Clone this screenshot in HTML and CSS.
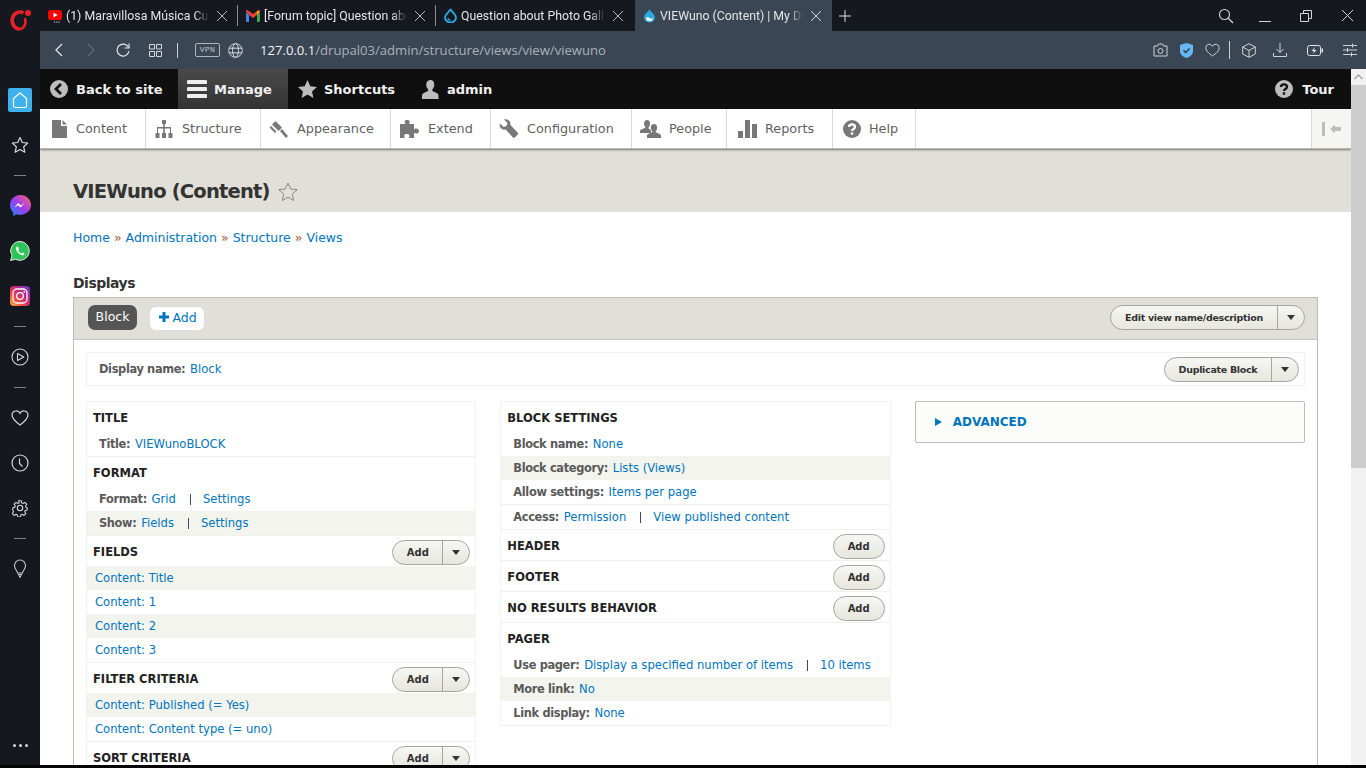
FILE: index.html
```html
<!DOCTYPE html>
<html lang="en">
<head>
<meta charset="utf-8">
<title>VIEWuno (Content) | My Drupal</title>
<link rel="stylesheet" href="styles.css">
</head>
<body>
<div class="app">
  <aside class="sidebar">
    <div class="logo">
      <svg width="24" height="24" viewBox="0 0 24 24"><path d="M15.500 4.800A8 8.500 0 1 0 12.500 21" fill="none" stroke="#e8202a" stroke-width="3.600"/><path d="M17 10c1.500 5-.5 10-4.500 11" fill="none" stroke="#e8202a" stroke-width="2.600"/><circle cx="20" cy="5" r="3" fill="#e8202a"/></svg>
    </div>
    <div class="side-item"><span class="home-tile"><svg width="18" height="18" viewBox="0 0 18 18"><path d="M2.500 7.500 9 2l6.500 5.500V15a1.500 1.500 0 0 1-1.500 1.500H4A1.500 1.500 0 0 1 2.500 15z" fill="none" stroke="#fff" stroke-width="1.200"/></svg></span></div>
    <div class="side-item"><svg width="18" height="18" viewBox="0 0 18 18"><path d="M9 1.500l2.300 5 5.400.6-4 3.700 1.100 5.400L9 13.500l-4.800 2.700 1.100-5.400-4-3.700 5.400-.6z" fill="none" stroke="#d5d7da" stroke-width="1.200" stroke-linejoin="round"/></svg></div>
    <div class="side-dash"></div>
    <div class="side-item"><svg width="21" height="21" viewBox="0 0 20 20"><defs><linearGradient id="msg" x1="0" y1="1" x2="1" y2="0"><stop offset="0" stop-color="#1a8cff"/><stop offset=".5" stop-color="#a33bf0"/><stop offset="1" stop-color="#ff6a68"/></linearGradient></defs><path d="M10 0C4.400 0 0 4.100 0 9.600c0 2.900 1.200 5.400 3.100 7.100V20l3-1.700c1.200.4 2.500.6 3.900.6 5.600 0 10-4.100 10-9.300S15.600 0 10 0z" fill="url(#msg)"/><path d="M4 12l3.800-4.300 2.500 2.300 3.600-2.300-3.800 4.300-2.500-2.300z" fill="#fff"/></svg></div>
    <div class="side-item"><svg width="20" height="20" viewBox="0 0 20 20"><path d="M10 .5a9.400 9.400 0 0 0-8 14.300L.6 19.500l4.800-1.300A9.400 9.400 0 1 0 10 .5z" fill="#2fc45a" stroke="#e6e6e6" stroke-width="1"/><path d="M7.200 5.600c-.4 0-1.200.7-1.200 2 0 2.600 3.300 6.300 6.300 6.700 1.300.1 2.200-.8 2.200-1.500 0-.5-1.800-1.400-2.200-1.300-.4.100-.6.900-1 .9-.9 0-2.900-1.800-3-2.800 0-.4.700-.7.700-1.100 0-.4-.8-2.900-1.800-2.900z" fill="#fff"/></svg></div>
    <div class="side-item"><svg width="20" height="20" viewBox="0 0 20 20"><defs><linearGradient id="ig" x1="0" y1="1" x2="1" y2="0"><stop offset="0" stop-color="#fdc04d"/><stop offset=".3" stop-color="#f2503c"/><stop offset=".6" stop-color="#c9237f"/><stop offset="1" stop-color="#6a3fd0"/></linearGradient></defs><rect width="20" height="20" rx="4" fill="url(#ig)"/><rect x="3" y="3" width="14" height="14" rx="4" fill="none" stroke="#fff" stroke-width="1.300"/><circle cx="10" cy="10" r="3.300" fill="none" stroke="#fff" stroke-width="1.300"/><circle cx="14.200" cy="5.800" r=".9" fill="#fff"/></svg></div>
    <div class="side-dash"></div>
    <div class="side-item"><svg width="18" height="18" viewBox="0 0 18 18"><circle cx="9" cy="9" r="8" fill="none" stroke="#d5d7da" stroke-width="1.100"/><path d="M6.500 5.500 12.800 9l-6.300 3.500z" fill="none" stroke="#d5d7da" stroke-width="1.100" stroke-linejoin="round"/></svg></div>
    <div class="side-dash"></div>
    <div class="side-item"><svg width="18" height="18" viewBox="0 0 18 18"><path d="M9 16C5 13 1 10 1 6a4.200 4.200 0 0 1 8-1.700A4.200 4.200 0 0 1 17 6c0 4-4 7-8 10z" fill="none" stroke="#d5d7da" stroke-width="1.200"/></svg></div>
    <div class="side-item"><svg width="18" height="18" viewBox="0 0 18 18"><circle cx="9" cy="9" r="8" fill="none" stroke="#d5d7da" stroke-width="1.200"/><path d="M8.500 4.500V9.500l3 3" fill="none" stroke="#d5d7da" stroke-width="1.200"/></svg></div>
    <div class="side-item"><svg width="18" height="18" viewBox="0 0 18 18"><circle cx="9" cy="9" r="2.700" fill="none" stroke="#d5d7da" stroke-width="1.100"/><path d="M7.500 1h3l.4 2.300 1.500.7 2-1.300 2.100 2.100-1.300 2 .7 1.500L17 8.700v2.600l-2.100.4-.7 1.500 1.300 2-2.100 2.100-2-1.300-1.500.7-.4 2.300h-3l-.4-2.300-1.500-.7-2 1.300-2.100-2.100 1.300-2-.7-1.500L1 11.300V8.700l2.100-.4.700-1.500-1.300-2 2.100-2.100 2 1.300 1.500-.7z" transform="translate(.9 .9) scale(.9)" fill="none" stroke="#d5d7da" stroke-width="1.200" stroke-linejoin="round"/></svg></div>
    <div class="side-dash"></div>
    <div class="side-item"><svg width="18" height="20" viewBox="0 0 18 20"><path d="M6.500 14c0-2-3-3.500-3-7.500a5.500 5.500 0 0 1 11 0c0 4-3 5.500-3 7.500z" fill="none" stroke="#c8cacd" stroke-width="1.100"/><path d="M7 15h4v1.500H7zM8 17h2v1.500H8z" fill="#c8cacd"/></svg></div>
    <div class="side-more"><i></i><i></i><i></i></div>
  </aside>

  <div class="browser">
    <div class="tabstrip">
      <div class="tab">
        <svg class="fav" width="14" height="14" viewBox="0 0 14 14"><rect y="1" width="14" height="10" rx="2.500" fill="#f00"/><path d="M5.500 3.500 9.500 6l-4 2.500z" fill="#fff"/><path d="M6 12.500h1.200v1H6zM8.200 12.500h1.200v1H8.200zM10.400 12.500h1.200v1h-1.200z" fill="#ddd"/></svg>
        <span class="tab-title">(1) Maravillosa Música Curativa</span>
        <svg class="tab-x" width="12" height="12" viewBox="0 0 12 12"><path d="M1 1l10 10M11 1 1 11" stroke="#b9bcc0" stroke-width="1"/></svg>
      </div>
      <div class="tab-sep"></div>
      <div class="tab">
        <svg class="fav" width="14" height="12" viewBox="0 0 14 12"><path d="M0 2v9a1 1 0 0 0 1 1h2V5z" fill="#4285f4"/><path d="M14 2v9a1 1 0 0 1-1 1h-2V5z" fill="#34a853"/><path d="M0 1.500C0 .3 1.300-.3 2.200.4L7 4l4.800-3.600c.9-.7 2.200-.1 2.200 1.100L11 5 7 8 3 5z" fill="#ea4335"/><path d="M11 .9l3 .6L11 5z" fill="#fbbc04"/></svg>
        <span class="tab-title">[Forum topic] Question about Photo</span>
        <svg class="tab-x" width="12" height="12" viewBox="0 0 12 12"><path d="M1 1l10 10M11 1 1 11" stroke="#b9bcc0" stroke-width="1"/></svg>
      </div>
      <div class="tab-sep"></div>
      <div class="tab">
        <svg class="fav" width="13" height="15" viewBox="0 0 13 15"><path d="M6.500 1C6 3.500 1 6 1 9.500a5.500 5 0 0 0 11 0C12 6 7 3.500 6.500 1z" fill="none" stroke="#2ba9e0" stroke-width="1.800"/><path d="M4 10c0 1.500 1.200 2.400 2.500 2.400" fill="none" stroke="#2ba9e0" stroke-width="1.200"/></svg>
        <span class="tab-title">Question about Photo Gallery</span>
        <svg class="tab-x" width="12" height="12" viewBox="0 0 12 12"><path d="M1 1l10 10M11 1 1 11" stroke="#b9bcc0" stroke-width="1"/></svg>
      </div>
      <div class="tab-gap"></div>
      <div class="tab tab-active">
        <svg class="fav" width="13" height="15" viewBox="0 0 13 15"><path d="M6.500 1C6 3.500 1 6 1 9.500a5.500 5 0 0 0 11 0C12 6 7 3.500 6.500 1z" fill="#2ba9e0"/><path d="M3 10c1-1.500 2.500-1 3.500 0s2.500 1 3.500 0c0 2-1.500 3.300-3.500 3.300S3 12 3 10z" fill="#fff"/></svg>
        <span class="tab-title">VIEWuno (Content) | My Drupal</span>
        <svg class="tab-x" width="12" height="12" viewBox="0 0 12 12"><path d="M1 1l10 10M11 1 1 11" stroke="#d5d8db" stroke-width="1"/></svg>
      </div>
      <svg class="tab-plus" width="12" height="12" viewBox="0 0 12 12"><path d="M6 0v12M0 6h12" stroke="#dfe1e3" stroke-width="1"/></svg>
      <div class="win-controls">
        <svg width="16" height="16" viewBox="0 0 16 16"><circle cx="6.500" cy="6.500" r="5" fill="none" stroke="#d5d7da" stroke-width="1.100"/><path d="M10 10l5 5" stroke="#d5d7da" stroke-width="1.200"/></svg>
        <svg width="12" height="12" viewBox="0 0 12 12"><path d="M0 11.500h12" stroke="#d5d7da" stroke-width="1"/></svg>
        <svg width="12" height="12" viewBox="0 0 12 12"><path d="M.5 3.500h8v8h-8zM3.500 3.500v-3h8v8h-3" fill="none" stroke="#d5d7da" stroke-width="1"/></svg>
        <svg width="13" height="13" viewBox="0 0 13 13"><path d="M1 1l11 11M12 1 1 12" stroke="#d5d7da" stroke-width="1"/></svg>
      </div>
    </div>

    <div class="addressbar">
      <div class="nav-left">
        <svg class="nav-back" width="10" height="14" viewBox="0 0 10 14"><path d="M8 1 2 7l6 6" fill="none" stroke="#e3e5e7" stroke-width="1.300"/></svg>
        <svg class="nav-fwd" width="10" height="14" viewBox="0 0 10 14"><path d="M2 1l6 6-6 6" fill="none" stroke="#5f6b79" stroke-width="1.300"/></svg>
        <svg class="nav-reload" width="14" height="14" viewBox="0 0 14 14"><path d="M12.500 4.500A6 6 0 1 0 13 8" fill="none" stroke="#e3e5e7" stroke-width="1.200"/><path d="M13 .5v4.500H8.500" fill="none" stroke="#e3e5e7" stroke-width="1.200"/></svg>
        <svg class="nav-grid" width="13" height="13" viewBox="0 0 13 13"><path d="M.5.5h5v4.500h-5zM7.500.5h5v4.500h-5zM.5 7.500h5v5h-5zM7.500 7.500h5v5h-5z" fill="none" stroke="#d5d7da" stroke-width="1"/></svg>
        <span class="nav-sep"></span>
        <span class="vpn">VPN</span>
        <svg class="nav-globe" width="15" height="15" viewBox="0 0 15 15"><g fill="none" stroke="#d5d7da" stroke-width="1"><circle cx="7.500" cy="7.500" r="6.800"/><ellipse cx="7.500" cy="7.500" rx="3" ry="6.800"/><path d="M1 5.200h13M1 9.800h13"/></g></svg>
        <span class="url"><span class="url-host">127.0.0.1</span>/drupal03/admin/structure/views/view/viewuno</span>
      </div>
      <div class="nav-right">
        <svg class="r-cam" width="15" height="14" viewBox="0 0 15 14"><path d="M1 3h3.500l1-2h4l1 2H14v10H1z" fill="none" stroke="#cfd2d5" stroke-width="1"/><circle cx="7.500" cy="8" r="2.500" fill="none" stroke="#cfd2d5" stroke-width="1"/></svg>
        <svg class="r-shield" width="13" height="15" viewBox="0 0 13 15"><path d="M6.500 0 13 2v6c0 3.500-3 5.800-6.500 7C3 13.800 0 11.500 0 8V2z" fill="#63b8f5"/><path d="M3.500 7.200l2.200 2.300 3.900-4" fill="none" stroke="#33404e" stroke-width="1.600"/></svg>
        <svg class="r-heart" width="15" height="14" viewBox="0 0 15 14"><path d="M7.500 13C4 10.500.8 8 .8 4.700a3.500 3.500 0 0 1 6.700-1.400 3.500 3.500 0 0 1 6.700 1.400C14.200 8 11 10.500 7.500 13z" fill="none" stroke="#cfd2d5" stroke-width="1"/></svg>
        <span class="r-sep"></span>
        <svg class="r-cube" width="14" height="15" viewBox="0 0 14 15"><path d="M7 .7 13.300 4v7L7 14.300.7 11V4zM.7 4 7 7.500 13.300 4M7 7.500v6.800" fill="none" stroke="#cfd2d5" stroke-width="1"/></svg>
        <svg class="r-dl" width="14" height="14" viewBox="0 0 14 14"><path d="M7 0v9.500M3.500 6 7 9.500 10.500 6M.5 10v3.500h13V10" fill="none" stroke="#cfd2d5" stroke-width="1"/></svg>
        <svg class="r-bat" width="16" height="11" viewBox="0 0 16 11"><rect x=".5" y=".5" width="13" height="10" rx="2" fill="none" stroke="#e3e5e7" stroke-width="1"/><path d="M14.500 3.500h1.500v4h-1.500z" fill="#e3e5e7"/><path d="M8 2 4.500 6h2.500l-1 3 3.500-4H7z" fill="#e3e5e7"/></svg>
        <svg class="r-set" width="14" height="14" viewBox="0 0 14 14"><path d="M0 2.500h14M0 7h14M0 11.500h14M9.500 .5v4M4.500 5v4M8.500 9.500v4" fill="none" stroke="#cfd2d5" stroke-width="1"/></svg>
      </div>
    </div>

    <div class="viewport">
      <div class="page">
        <nav class="toolbar">
          <a class="tb-item tb-back">
            <svg width="18" height="18" viewBox="0 0 18 18"><circle cx="9" cy="9" r="9" fill="#bdbdbd"/><path d="M11 4 6 9l5 5" fill="none" stroke="#111" stroke-width="2.800"/></svg>
            <span>Back to site</span>
          </a>
          <a class="tb-item tb-manage">
            <svg width="20" height="18" viewBox="0 0 20 18"><path d="M1.500 0h17a1.500 1.500 0 0 1 0 4h-17a1.500 1.500 0 0 1 0-4zM1.500 7h17a1.500 1.500 0 0 1 0 4h-17a1.500 1.500 0 0 1 0-4zM1.500 14h17a1.500 1.500 0 0 1 0 4h-17a1.500 1.500 0 0 1 0-4z" fill="#eee"/></svg>
            <span>Manage</span>
          </a>
          <a class="tb-item tb-short">
            <svg width="19" height="18" viewBox="0 0 19 18"><path d="M9.500 0l2.800 6.200 6.700.7-5 4.500 1.400 6.600-5.900-3.400L3.600 18 5 11.400 0 6.900l6.700-.7z" fill="#bdbdbd"/></svg>
            <span>Shortcuts</span>
          </a>
          <a class="tb-item tb-admin">
            <svg width="19" height="19" viewBox="0 0 19 19"><path d="M9.500 0c2.300 0 3.800 1.900 3.800 4.500 0 2-.8 3.700-1.800 4.800-.5.600-.3 1.600.4 1.900 2.300 1 5.600 2 5.600 4.300V19H1v-3.500c0-2.300 3.300-3.300 5.600-4.300.7-.3.900-1.300.4-1.900-1-1.100-1.800-2.800-1.800-4.800C5.200 1.900 7.200 0 9.500 0z" fill="#bdbdbd"/></svg>
            <span>admin</span>
          </a>
          <a class="tb-item tb-tour">
            <svg width="18" height="18" viewBox="0 0 18 18"><circle cx="9" cy="9" r="9" fill="#bdbdbd"/><path d="M6 7c0-3.500 6-3.500 6 0 0 2-3 2-3 4" fill="none" stroke="#111" stroke-width="2.300"/><rect x="7.800" y="12.300" width="2.400" height="2.400" fill="#111"/></svg>
            <span>Tour</span>
          </a>
        </nav>

        <nav class="tray">
          <a class="tray-item w-content"><svg width="15" height="18" viewBox="0 0 15 18"><path d="M0 0h9v6h6v12H0zM10.500 0 15 4.500h-4.500z" fill="#787878"/></svg><span>Content</span></a>
          <a class="tray-item w-structure"><svg width="18" height="18" viewBox="0 0 18 18"><path d="M7 0h4v4H9.800v3H16v6h1.500v5h-4v-5H15V8.500H9.800V13H11v5H7v-5h1.200V8.500H3V13h1.500v5h-4v-5H2V7h6.200V4H7z" fill="#787878"/></svg><span>Structure</span></a>
          <a class="tray-item w-appearance"><svg width="20" height="20" viewBox="0 0 20 20"><path d="M6.500 1 13 7.500 9.500 11 3 4.500zM2 6l5.500 5.500L6 13 .5 7.500z" fill="#787878" transform="translate(0 1)"/><path d="M11 12l2-2 6 7-2 2z" fill="#787878"/></svg><span>Appearance</span></a>
          <a class="tray-item w-extend"><svg width="19" height="18" viewBox="0 0 19 18"><path d="M0 4h5c1-.5-.5-1.500-.5-2.500S6-.2 7.500 0s2.500 1 2.300 2c-.2.900-1 1.500-.3 2H14v5c.5.600 1-.6 2.500-.4S19 10 19 11.300s-1.500 2.500-2.500 2.300-2-.9-2.500-.3V18H9c-.5-.6.800-1 .5-2.300S8 14 6.500 14s-2.500.6-2.300 1.900.7 1.500.3 2.100H0z" fill="#787878"/></svg><span>Extend</span></a>
          <a class="tray-item w-config"><svg width="19" height="19" viewBox="0 0 19 19"><path d="M1 4.500 4.500 8l3-1 1-3L5 .5C8-.8 12 1.500 11.500 6L19 14c.3.500.1 1-.2 1.500l-3 3c-.5.5-1.200.500-1.800 0L6.800 10.500C2.500 11.500-.5 8 1 4.500z" fill="#787878"/></svg><span>Configuration</span></a>
          <a class="tray-item w-people"><svg width="21" height="19" viewBox="0 0 21 19"><path d="M7 0c2 0 3 1.600 3 3.800 0 1.600-.7 2.900-1.400 3.800-.3.500 0 1 .5 1.300L11 10v3H0v-2c0-1.500 3-2 4.800-3 .5-.3.700-.8.400-1.300C4.500 5.800 4 5 4 3.800 4 1.600 5 0 7 0z" fill="#787878" transform="translate(0 1)"/><path d="M14 5c2 0 3.200 1.500 3.200 3.700 0 1.500-.7 2.700-1.400 3.600-.3.500-.1 1 .4 1.300 1.700.9 4.800 1.400 4.800 3v2.400H7v-2.400c0-1.600 3.100-2.100 4.800-3 .5-.3.700-.8.400-1.300-.7-.9-1.400-2.100-1.400-3.600C10.800 6.500 12 5 14 5z" fill="#787878"/></svg><span>People</span></a>
          <a class="tray-item w-reports"><svg width="19" height="18" viewBox="0 0 19 18"><path d="M0 11h5v7H0zM7 0h5v18H7zM14 4h5v14h-5z" fill="#787878"/></svg><span>Reports</span></a>
          <a class="tray-item w-help"><svg width="18" height="18" viewBox="0 0 18 18"><circle cx="9" cy="9" r="9" fill="#787878"/><path d="M6 7c0-3.500 6-3.500 6 0 0 2-3 2-3 4" fill="none" stroke="#fff" stroke-width="2.200"/><rect x="7.800" y="12.300" width="2.400" height="2.400" fill="#fff"/></svg><span>Help</span></a>
          <a class="tray-collapse"><svg width="20" height="14" viewBox="0 0 20 14"><path d="M0 0h3v14H0zM8 7l5-4.500V5h6v4h-6v2.500z" fill="#bdbdbd"/></svg></a>
        </nav>

        <header class="page-head">
          <h1>VIEWuno (Content)</h1>
          <svg width="20" height="19" viewBox="0 0 20 19"><path d="M10 1l2.700 6 6.500.7-4.900 4.400 1.400 6.400L10 15.200l-5.700 3.300 1.400-6.400L.8 7.700 7.300 7z" fill="none" stroke="#8c8a7c" stroke-width="1"/></svg>
        </header>

        <main class="content">
          <div class="crumbs"><a>Home</a> <i>»</i> <a>Administration</a> <i>»</i> <a>Structure</a> <i>»</i> <a>Views</a></div>
          <h2>Displays</h2>
          <section class="displays">
            <div class="disp-bar">
              <span class="pill-active">Block</span>
              <a class="pill-add"><svg width="10" height="10" viewBox="0 0 10 10"><path d="M3.500 0h3v3.500H10v3H6.500V10h-3V6.500H0v-3h3.500z" fill="#0074bd"/></svg>Add</a>
              <div class="drop bar-drop"><span class="drop-main">Edit view name/description</span><span class="drop-arrow"></span></div>
            </div>
            <div class="disp-body">
              <div class="disp-name">
                <p><b>Display name:</b> <a>Block</a></p>
                <div class="drop"><span class="drop-main drop-dup">Duplicate Block</span><span class="drop-arrow"></span></div>
              </div>
              <div class="cols">
                <div class="col">
                  <div class="sec">
                    <h3>TITLE</h3>
                    <div class="opt"><b>Title:</b> <a>VIEWunoBLOCK</a></div>
                  </div>
                  <div class="sec">
                    <h3>FORMAT</h3>
                    <div class="opt"><b>Format:</b> <a>Grid</a><u></u><a>Settings</a></div>
                    <div class="opt odd"><b>Show:</b> <a>Fields</a><u></u><a>Settings</a></div>
                  </div>
                  <div class="sec">
                    <div class="sec-head"><h3>FIELDS</h3><div class="drop"><span class="drop-main drop-add">Add</span><span class="drop-arrow"></span></div></div>
                    <div class="field odd"><a>Content: Title</a></div>
                    <div class="field"><a>Content: 1</a></div>
                    <div class="field odd"><a>Content: 2</a></div>
                    <div class="field"><a>Content: 3</a></div>
                  </div>
                  <div class="sec">
                    <div class="sec-head"><h3>FILTER CRITERIA</h3><div class="drop"><span class="drop-main drop-add">Add</span><span class="drop-arrow"></span></div></div>
                    <div class="field odd"><a>Content: Published (= Yes)</a></div>
                    <div class="field"><a>Content: Content type (= uno)</a></div>
                  </div>
                  <div class="sec">
                    <div class="sec-head"><h3>SORT CRITERIA</h3><div class="drop"><span class="drop-main drop-add">Add</span><span class="drop-arrow"></span></div></div>
                  </div>
                </div>
                <div class="col">
                  <div class="sec">
                    <h3>BLOCK SETTINGS</h3>
                    <div class="opt"><b>Block name:</b> <a>None</a></div>
                    <div class="opt odd"><b>Block category:</b> <a>Lists (Views)</a></div>
                    <div class="opt ruled"><b>Allow settings:</b> <a>Items per page</a></div>
                    <div class="opt"><b>Access:</b> <a>Permission</a><u></u><a>View published content</a></div>
                  </div>
                  <div class="sec"><div class="sec-head"><h3>HEADER</h3><span class="btn-add">Add</span></div></div>
                  <div class="sec"><div class="sec-head"><h3>FOOTER</h3><span class="btn-add">Add</span></div></div>
                  <div class="sec"><div class="sec-head"><h3>NO RESULTS BEHAVIOR</h3><span class="btn-add">Add</span></div></div>
                  <div class="sec">
                    <h3>PAGER</h3>
                    <div class="opt"><b>Use pager:</b> <a>Display a specified number of items</a><u></u><a>10 items</a></div>
                    <div class="opt odd"><b>More link:</b> <a>No</a></div>
                    <div class="opt"><b>Link display:</b> <a>None</a></div>
                  </div>
                </div>
                <div class="col col-plain">
                  <div class="advanced"><span class="tri"></span><a>ADVANCED</a></div>
                </div>
              </div>
            </div>
          </section>
        </main>
      </div>
      <div class="scrollbar">
        <div class="sb-up"><svg width="9" height="6" viewBox="0 0 9 6"><path d="M.5 5 4.500 1l4 4" fill="none" stroke="#a3a3a3" stroke-width="1.400"/></svg></div>
        <div class="sb-thumb"></div>
      </div>
    </div>
  </div>
  <div class="bottom-line"></div>
</div>
</body>
</html>
```
FILE: styles.css
```css
* { box-sizing: border-box; }
html, body { margin: 0; height: 100%; overflow: hidden; }
body { font-family: "DejaVu Sans", sans-serif; font-size: 11.600px; color: #333; background: #fff; }
a { color: #0074bd; text-decoration: none; }
svg { display: block; flex: none; }

.app { display: grid; grid-template-columns: 40px 1fr; grid-template-rows: 1fr 3px; height: 768px; }
.bottom-line { grid-column: 1 / 3; background: #050505; }

/* sidebar */
.sidebar { background: #15191f; display: flex; flex-direction: column; align-items: center; min-height: 0; }
.logo { height: 34px; padding-top: 6px; margin-bottom: 43px; width: 100%; display: flex; justify-content: center; align-items: center; }
.side-item { height: 45px; width: 100%; display: flex; align-items: center; justify-content: center; flex: none; }
.side-dash { height: 16px; width: 12px; flex: none; display: flex; align-items: center; }
.side-dash::before { content: ""; display: block; width: 12px; height: 1px; background: #7d8186; }
.home-tile { width: 24px; height: 24px; border-radius: 2px; background: #3fb2ee; display: flex; align-items: center; justify-content: center; }
.side-more { margin-top: auto; height: 40px; display: flex; gap: 3px; align-items: center; }
.side-more i { width: 3px; height: 3px; border-radius: 50%; background: #d5d7da; }

/* browser chrome */
.browser { display: flex; flex-direction: column; min-width: 0; min-height: 0; }
.tabstrip { height: 31px; background: #15191f; display: flex; align-items: center; flex: none; font-family: Roboto, sans-serif; }
.tab { width: 197px; height: 31px; display: flex; align-items: center; padding: 0 9px 0 8px; flex: none; color: #e3e5e7; }
.tab-active { background: #3a4654; padding-right: 10px; }
.tab-sep { width: 1px; height: 21px; background: #8a8d92; flex: none; }
.tab-gap { width: 2px; flex: none; }
.fav { margin-right: 4px; }
.tab-title { flex: 1; min-width: 0; white-space: nowrap; overflow: hidden; font-size: 12.300px; -webkit-mask-image: linear-gradient(to right, #000 90%, transparent 100%); mask-image: linear-gradient(to right, #000 90%, transparent 100%); }
.tab-x { margin-left: 7px; }
.tab-plus { margin-left: 7px; }
.win-controls { margin-left: auto; display: flex; align-items: center; gap: 29px; padding-right: 12px; }
.win-controls svg:nth-child(2) { margin-left: -4px; }

.addressbar { height: 38px; background: #3a4654; display: flex; align-items: center; justify-content: space-between; flex: none; }
.nav-left, .nav-right { display: flex; align-items: center; }
.nav-back { margin-left: 14px; }
.nav-fwd { margin-left: 22px; }
.nav-reload { margin-left: 20px; }
.nav-grid { margin-left: 19px; }
.nav-sep { width: 1px; height: 15px; background: #cfd2d5; margin-left: 15px; }
.vpn { margin-left: 17px; width: 25px; height: 14px; border: 1px solid #aeb4ba; border-radius: 2px; font-size: 8px; line-height: 12px; text-align: center; color: #c3c7cb; letter-spacing: .3px; font-family: "Liberation Mono", monospace; }
.nav-globe { margin-left: 8px; }
.url { margin-left: 17px; font-family: "Open Sans", sans-serif; font-size: 13.100px; color: #a9b2bb; white-space: nowrap; }
.url-host { color: #f2f3f4; }
.nav-right { padding-right: 9px; }
.r-shield { margin-left: 12px; }
.r-heart { margin-left: 12px; }
.r-sep { width: 1px; height: 18px; background: #cfd2d5; margin-left: 9px; }
.r-cube { margin-left: 12px; }
.r-dl { margin-left: 17px; }
.r-bat { margin-left: 20px; }
.r-set { margin-left: 20px; }

/* viewport */
.viewport { flex: 1; min-height: 0; display: flex; }
.page { flex: 1; min-width: 0; overflow: hidden; background: #fff; }
.scrollbar { width: 15px; flex: none; background: #f1f1f1; display: flex; flex-direction: column; }
.sb-up { height: 16px; display: flex; align-items: center; justify-content: center; flex: none; }
.sb-thumb { height: 383px; background: #cdcdcd; flex: none; }

/* toolbar */
.toolbar { height: 40px; background: #0f0f0f; display: flex; align-items: stretch; font-weight: 700; font-size: 13px; color: #f0f0f0; }
.tb-item { display: flex; align-items: center; gap: 8px; color: #f0f0f0; white-space: nowrap; }
.tb-back { width: 138px; padding-left: 10px; }
.tb-manage { width: 110px; padding-left: 9px; gap: 7px; background: linear-gradient(#4a4a4a, #333); }
.tb-short { width: 110px; padding-left: 10px; gap: 7px; }
.tb-admin { padding-left: 23px; gap: 7px; }
.tb-tour { margin-left: auto; padding-right: 17px; gap: 9px; }

.tray { height: 40px; background: #fff; display: flex; align-items: stretch; box-shadow: 0 1px 2px rgba(0,0,0,.45); border-bottom: 1px solid #b5b5ad; position: relative; font-size: 12.800px; color: #5f5f5f; }
.tray-item { display: flex; align-items: center; gap: 9px; padding-left: 12px; border-right: 1px solid #d9d9d9; color: #5f5f5f; white-space: nowrap; }
.w-content { width: 106px; }
.w-structure { width: 115px; padding-left: 9px; }
.w-appearance { width: 130px; padding-left: 8px; gap: 8px; }
.w-extend { width: 100px; padding-left: 9px; }
.w-config { width: 141px; padding-left: 8px; }
.w-people { width: 95px; padding-left: 8px; gap: 8px; }
.w-reports { width: 106px; padding-left: 11px; gap: 8px; }
.w-help { width: 83px; padding-left: 10px; gap: 8px; }
.tray-collapse { margin-left: auto; width: 40px; background: #f5f5f2; border-left: 1px solid #d9d9d9; display: flex; align-items: center; justify-content: center; }

.page-head { height: 63px; background: #e0e0d8; padding: 21px 0 0 33px; display: flex; align-items: center; gap: 8px; }
.page-head h1 { margin: 0; font-size: 19.500px; letter-spacing: -.8px; font-weight: 700; color: #333; }

.content { padding: 17px 33px 0; }
.crumbs { font-size: 12.500px; line-height: 18px; height: 18px; }
.crumbs i { font-style: normal; color: #a05a3c; }
.content h2 { margin: 26px 0 4px; font-size: 14px; letter-spacing: -.5px; line-height: 20px; font-weight: 700; color: #333; }
.displays { border: 1px solid #bdbdb8; border-bottom: 0; }
.disp-bar { height: 42px; background: #e0e0d8; border-bottom: 1px solid #c8c8c2; display: flex; align-items: center; padding: 0 12px 3px 14px; }
.pill-active { width: 49px; height: 25px; background: #555; color: #fff; border-radius: 7px; font-size: 12.500px; text-align: center; line-height: 23px; }
.pill-add { margin: 2px 0 0 12px; width: 56px; height: 25px; padding: 0 0 2px 2px; background: #fff; border-radius: 7px; border: 1px solid #ddd; font-size: 12.500px; display: flex; align-items: center; justify-content: center; gap: 3px; }
.bar-drop { margin-left: auto; }

.drop { display: flex; height: 25px; border: 1px solid #a6a69f; border-radius: 13px; background: linear-gradient(#f6f6f3, #e7e7df); font-size: 9.500px; letter-spacing: -.3px; font-weight: 700; color: #333; white-space: nowrap; flex: none; }
.drop-main { width: 167px; display: flex; align-items: center; justify-content: center; border-right: 1px solid #a6a69f; }
.drop-dup { width: 107px; }
.drop-add { width: 50px; font-size: 10px; letter-spacing: 0; }
.drop-arrow { width: 26px; display: flex; align-items: center; justify-content: center; }
.drop-arrow::before { content: ""; border: 4.500px solid transparent; border-top: 5px solid #333; border-bottom: 0; }

.disp-body { padding: 12px 12px 0; }
.disp-name { height: 34px; border: 1px solid #f2f2f0; display: flex; align-items: center; justify-content: space-between; padding: 0 5px 0 12px; }
.disp-name p { margin: 0; }
b { font-weight: 700; font-size: 11.400px; letter-spacing: -.35px; color: #5a5a5a; margin-right: 1px; }
.cols { display: grid; grid-template-columns: repeat(3, 1fr); gap: 24px; margin-top: 15px; align-items: start; }
.sec { border-bottom: 1px solid #f0f0ec; }
.col { border: 1px solid #f3f3f0; border-bottom: 0; }
.col-plain { border: 0; }
h3 { margin: 0; height: 30px; line-height: 32px; padding-left: 6px; font-size: 11.500px; font-weight: 700; color: #222; }
.sec-head { height: 30px; display: flex; align-items: center; justify-content: space-between; padding: 3px 5px 0 0; }
.sec-head h3 { line-height: 29px; }
.opt { height: 24px; line-height: 24px; padding-left: 12px; white-space: nowrap; }
.field { height: 24px; line-height: 24px; padding-left: 8px; white-space: nowrap; }
.ruled { border-bottom: 1px solid #f0f0ec; height: 25px; }
.odd { background: #f3f4ee; }
u { display: inline-block; width: 1px; height: 11px; vertical-align: -2px; background: #3d4a57; margin: 0 12px 0 14px; }
.btn-add { width: 52px; height: 25px; border: 1px solid #a6a69f; border-radius: 13px; background: linear-gradient(#f6f6f3, #e7e7df); font-size: 10px; font-weight: 700; color: #333; text-align: center; line-height: 23px; }
.advanced { height: 42px; border: 1px solid #bdbdb8; border-radius: 2px; background: #fcfcfa; display: flex; align-items: center; padding: 0 0 1px 19px; gap: 11px; font-size: 12px; font-weight: 700; }
.tri { border-left: 7px solid #0074bd; border-top: 4px solid transparent; border-bottom: 4px solid transparent; }
```
